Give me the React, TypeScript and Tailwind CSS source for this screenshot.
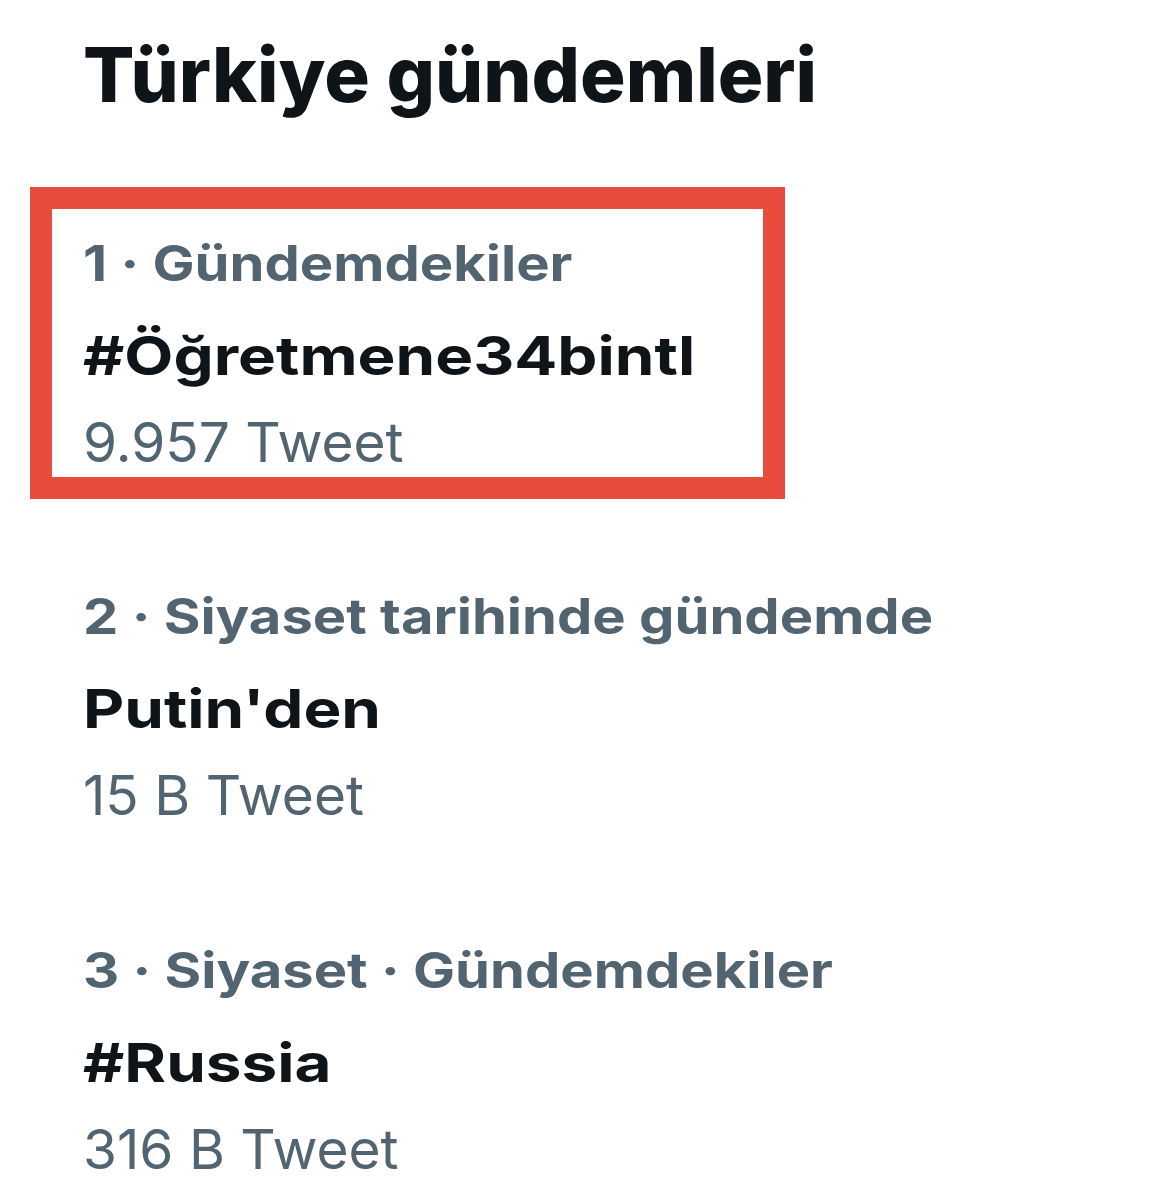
import React from "react";

type Trend = {
  label: string;
  title: string;
  count: string;
};

const trends: Trend[] = [
  { label: "1 · Gündemdekiler", title: "#Öğretmene34bintl", count: "9.957 Tweet" },
  { label: "2 · Siyaset tarihinde gündemde", title: "Putin'den", count: "15 B Tweet" },
  { label: "3 · Siyaset · Gündemdekiler", title: "#Russia", count: "316 B Tweet" },
];

function TrendItem({ t }: { t: Trend }) {
  return (
    <div className="flex flex-col items-start">
      <div className="origin-left scale-x-[1.145] text-[49px] leading-[56px] font-bold text-[#536471] whitespace-nowrap">
        {t.label}
      </div>
      <div className="origin-left scale-x-[1.18] mt-[32px] text-[54px] leading-[64px] font-bold text-[#0f1419] whitespace-nowrap">
        {t.title}
      </div>
      <div className="mt-[24px] text-[55px] leading-[60px] font-normal text-[#536471] whitespace-nowrap">
        {t.count}
      </div>
    </div>
  );
}

export default function App() {
  return (
    <div
      className="w-[1160px] h-[1200px] bg-white overflow-hidden pt-[34px]"
      style={{ fontFamily: "Inter, 'Liberation Sans', sans-serif" }}
    >
      <h1 className="pl-[83px] text-[76px] leading-[80px] font-extrabold text-[#0f1419] whitespace-nowrap">
        Türkiye gündemleri
      </h1>

      <div className="ml-[30px] mt-[73px] w-[755px] border-[22px] border-[#e84c3d] pl-[31px] pt-[27px] pb-[5px]">
        <TrendItem t={trends[0]} />
      </div>

      <div className="pl-[83px] mt-[90px]">
        <TrendItem t={trends[1]} />
      </div>

      <div className="pl-[83px] mt-[118px]">
        <TrendItem t={trends[2]} />
      </div>
    </div>
  );
}
